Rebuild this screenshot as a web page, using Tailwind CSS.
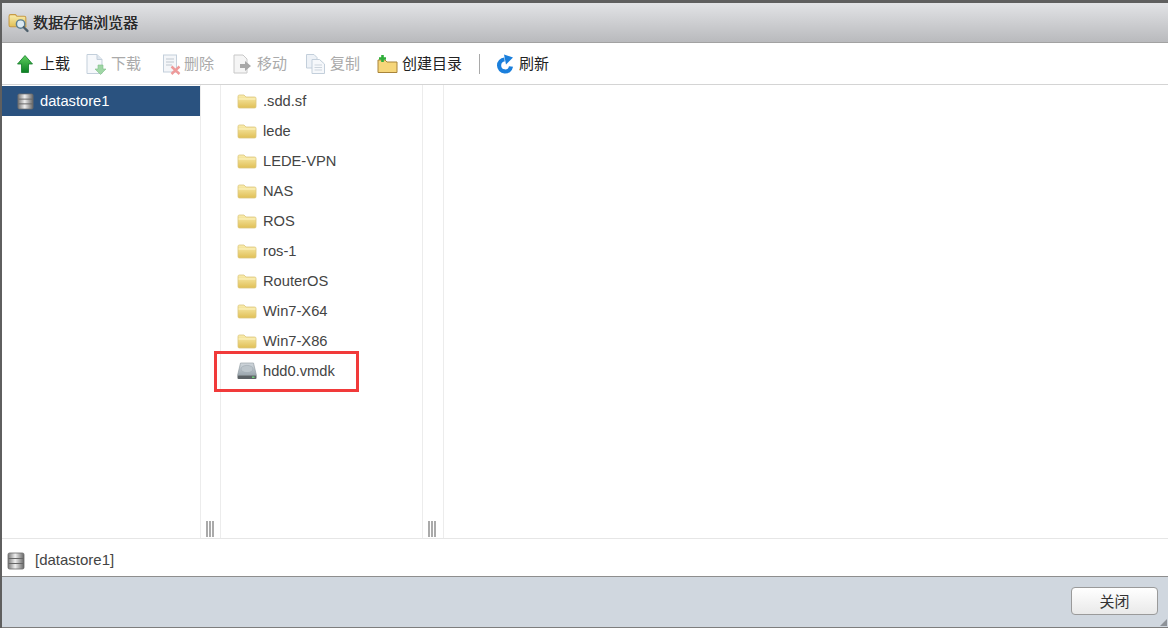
<!DOCTYPE html>
<html lang="zh">
<head>
<meta charset="utf-8">
<title>数据存储浏览器</title>
<script src="https://cdn.jsdelivr.net/npm/@tailwindcss/browser@4"></script>
</head>
<body class="m-0 w-[1168px] h-[628px] overflow-hidden bg-[#5f5f5f] font-['Liberation_Sans','Noto_Sans_CJK_SC',sans-serif] text-[14.7px] text-[#333]">
<svg width="0" height="0" class="absolute">
  <defs>
    <linearGradient id="fold" x1="0" y1="0" x2="0" y2="1"><stop offset="0" stop-color="#faeeb0"/><stop offset="1" stop-color="#e0bf55"/></linearGradient>
    <linearGradient id="disk" x1="0" y1="0" x2="1" y2="0"><stop offset="0" stop-color="#777"/><stop offset=".45" stop-color="#eee"/><stop offset="1" stop-color="#666"/></linearGradient>
    <linearGradient id="hdd" x1="0" y1="0" x2="0" y2="1"><stop offset="0" stop-color="#d2d9de"/><stop offset="1" stop-color="#9aa5ad"/></linearGradient>
    <linearGradient id="up" x1="0" y1="0" x2="0" y2="1"><stop offset="0" stop-color="#5fd05f"/><stop offset="1" stop-color="#0b7f22"/></linearGradient>
    <symbol id="folder" viewBox="0 0 20 16"><path d="M1 3.500C1 2.500 1.600 2 2.500 2H7L9 4H17.500C18.500 4 19 4.500 19 5.500V13.500C19 14.500 18.500 15 17.500 15H2.500C1.500 15 1 14.500 1 13.500Z" fill="url(#fold)" stroke="#dcc77e" stroke-width=".8"/><path d="M1.500 6H18.500" stroke="#fff6c8" stroke-width="1"/></symbol>
    <symbol id="ds" viewBox="0 0 18 18"><rect x="1" y="1" width="16" height="16" rx="1.500" fill="url(#disk)" stroke="#6b6b6b" stroke-width=".8"/><path d="M1.500 6.500H16.500M1.500 11.500H16.500" stroke="#666" stroke-width="1"/></symbol>
    <symbol id="page" viewBox="0 0 20 22"><path d="M1 1.500H11L16 6.500V20.500H1Z" fill="#f6f8fb" stroke="#c3cfdb"/><path d="M11 1.500V6.500H16" fill="#dfe6ee" stroke="#c3cfdb"/></symbol>
  </defs>
</svg>

<div class="mt-[3px] ml-[2px] h-[625px] flex flex-col bg-white rounded-tl-[3px]">
  <!-- Title bar -->
  <header class="h-[40px] shrink-0 flex items-center pl-[6px] gap-[4px] bg-gradient-to-b from-[#e2e3e6] to-[#b9babd] border-b border-[#a2a2a2]">
    <svg width="21" height="21" viewBox="0 0 20 20" class="shrink-0">
      <path d="M1 4C1 3 1.500 2.500 2.500 2.500H7L8.500 4H15.500C16.500 4 17 4.500 17 5.500V14H2.500C1.500 14 1 13.500 1 12.500Z" fill="url(#fold)" stroke="#c79a45"/>
      <circle cx="12" cy="11.500" r="4" fill="#dbeaf3" stroke="#5c7f93" stroke-width="1.400"/>
      <path d="M15 14.500L18.500 18" stroke="#4d5f6b" stroke-width="2.200" stroke-linecap="round"/>
    </svg>
    <h1 class="text-[15px] leading-none font-normal text-[#2b2b2b] [text-shadow:0.3px_0_0_#2b2b2b]">数据存储浏览器</h1>
  </header>

  <!-- Toolbar -->
  <nav class="h-[42px] shrink-0 flex items-center pl-[14px] border-b border-[#d4d4d4] text-[15px] leading-none">
    <div class="flex items-center gap-[6px] w-[70px] text-[#222]">
      <svg width="18" height="20" viewBox="0 0 17 20"><path d="M8.500 1.500L16 10H12V18.500H5V10H1Z" fill="url(#up)" stroke="#0f7a26" stroke-width=".8"/></svg>
      <span>上载</span>
    </div>
    <div class="flex items-center gap-[4px] w-[76px] text-[#aaa]">
      <svg width="21" height="22" viewBox="0 0 21 22"><use href="#page" width="20" height="22"/><path d="M12 12H17V16H20L14.500 21.500L9 16H12Z" fill="#9fd6a5" stroke="#7fbf88" stroke-width=".6"/></svg>
      <span>下载</span>
    </div>
    <div class="flex items-center gap-[3px] w-[71px] text-[#aaa]">
      <svg width="19" height="22" viewBox="0 0 19 22"><rect x="1.500" y="2" width="13" height="17" fill="#f4f6f9" stroke="#c3cfdb"/><path d="M4 6H12M4 9H12M4 12H10" stroke="#c0c8d0"/><path d="M9.500 13.500L17.500 21M17.500 13.500L9.500 21" stroke="#ee9a9a" stroke-width="2.400"/></svg>
      <span>删除</span>
    </div>
    <div class="flex items-center gap-[5px] w-[72px] text-[#aaa]">
      <svg width="19" height="22" viewBox="0 0 19 22"><path d="M1 2H10L14 6V20H1Z" fill="#f5f5f5" stroke="#c8c8c8"/><path d="M7 11H12V8L18 13L12 18V15H7Z" fill="#a8a8a8"/></svg>
      <span>移动</span>
    </div>
    <div class="flex items-center gap-[4px] w-[72px] text-[#aaa]">
      <svg width="21" height="22" viewBox="0 0 21 22"><path d="M1.500 1.500H9L12 4.500V15H1.500Z" fill="#eef2f7" stroke="#c3cfdb"/><path d="M7 6.500H14.500L19.500 11V20.500H7Z" fill="#f6f8fb" stroke="#c3cfdb"/><path d="M9.500 12H17M9.500 14.500H17M9.500 17H17" stroke="#cdd5dd"/></svg>
      <span>复制</span>
    </div>
    <div class="flex items-center gap-[4px] w-[102px] text-[#222]">
      <svg width="21" height="20" viewBox="0 0 21 20"><path d="M1 6H8L10 8H20V18.500H1Z" fill="#f6d67a" stroke="#a8843a"/><path d="M5.500 1V8M2 4.500H9" stroke="#2fae3a" stroke-width="2.600"/></svg>
      <span>创建目录</span>
    </div>
    <div class="w-px h-[20px] bg-[#a9a9a9] mr-[16px]"></div>
    <div class="flex items-center gap-[5px] text-[#222]">
      <svg width="18" height="20" viewBox="0 0 18 20"><path d="M15 12.500A6 6 0 1 1 8.500 5.500" fill="none" stroke="#1a7fdc" stroke-width="4.200"/><path d="M8 0.500L17 3.500L10 10.500Z" fill="#1a7fdc"/></svg>
      <span>刷新</span>
    </div>
  </nav>

  <!-- Browser columns -->
  <main class="relative flex-1 min-h-0 flex">
    <section class="w-[198px] shrink-0 pt-px">
      <div class="h-[30px] flex items-center pl-[15px] gap-[6px] bg-[#2a527f] text-white">
        <svg width="17" height="17"><use href="#ds" width="17" height="17"/></svg>
        <span>datastore1</span>
      </div>
    </section>
    <div class="w-[21px] shrink-0 flex items-end justify-center border-x border-[#ececec] pb-px pr-[2px]">
      <div class="flex gap-px"><i class="block w-[2px] h-[16px] bg-[#aaa]"></i><i class="block w-[2px] h-[16px] bg-[#aaa]"></i><i class="block w-[2px] h-[16px] bg-[#aaa]"></i></div>
    </div>
    <section class="w-[201px] shrink-0 pt-px pl-[16px] text-[#444]">
      <div class="h-[30px] flex items-center gap-[6px]"><svg width="20" height="16"><use href="#folder" width="20" height="16"/></svg><span>.sdd.sf</span></div>
      <div class="h-[30px] flex items-center gap-[6px]"><svg width="20" height="16"><use href="#folder" width="20" height="16"/></svg><span>lede</span></div>
      <div class="h-[30px] flex items-center gap-[6px]"><svg width="20" height="16"><use href="#folder" width="20" height="16"/></svg><span>LEDE-VPN</span></div>
      <div class="h-[30px] flex items-center gap-[6px]"><svg width="20" height="16"><use href="#folder" width="20" height="16"/></svg><span>NAS</span></div>
      <div class="h-[30px] flex items-center gap-[6px]"><svg width="20" height="16"><use href="#folder" width="20" height="16"/></svg><span>ROS</span></div>
      <div class="h-[30px] flex items-center gap-[6px]"><svg width="20" height="16"><use href="#folder" width="20" height="16"/></svg><span>ros-1</span></div>
      <div class="h-[30px] flex items-center gap-[6px]"><svg width="20" height="16"><use href="#folder" width="20" height="16"/></svg><span>RouterOS</span></div>
      <div class="h-[30px] flex items-center gap-[6px]"><svg width="20" height="16"><use href="#folder" width="20" height="16"/></svg><span>Win7-X64</span></div>
      <div class="h-[30px] flex items-center gap-[6px]"><svg width="20" height="16"><use href="#folder" width="20" height="16"/></svg><span>Win7-X86</span></div>
      <div class="h-[30px] flex items-center gap-[6px]">
        <svg width="20" height="18" viewBox="0 0 20 18"><path d="M3.500 1H16.500L19.500 13.500H0.500Z" fill="url(#hdd)" stroke="#8b959c" stroke-width=".6"/><ellipse cx="10" cy="7" rx="6" ry="3.600" fill="#bcc5cb" stroke="#a0aab1" stroke-width=".6"/><rect x="0.500" y="13.500" width="19" height="3.500" rx="1" fill="#5c6266"/><rect x="15" y="14.500" width="2.500" height="1.500" fill="#6fcf7a"/></svg>
        <span>hdd0.vmdk</span>
      </div>
    </section>
    <div class="w-[22px] shrink-0 flex items-end justify-center border-x border-[#ececec] pb-px pr-[2px]">
      <div class="flex gap-px"><i class="block w-[2px] h-[16px] bg-[#aaa]"></i><i class="block w-[2px] h-[16px] bg-[#aaa]"></i><i class="block w-[2px] h-[16px] bg-[#aaa]"></i></div>
    </div>
    <section class="flex-1"></section>
    <!-- Annotation over the list -->
    <div class="absolute left-[212px] top-[266px] w-[145px] h-[41px] border-[3px] border-[#f13a3a]"></div>
  </main>

  <!-- Status -->
  <div class="h-[39px] shrink-0 flex items-center pl-[5px] pt-[6px] gap-[10px] border-t border-t-[#e6e6e6] border-b border-b-[#8e8e8e] text-[15px] text-[#444]">
    <svg width="18" height="18"><use href="#ds" width="18" height="18"/></svg>
    <span>[datastore1]</span>
  </div>

  <!-- Footer -->
  <footer class="relative h-[51px] shrink-0 flex items-start justify-end pt-[10px] pr-[10px] bg-[#d0d7df] border-b border-[#7d7d7d]">
    <button class="w-[87px] h-[28px] rounded-[4px] border border-[#9a9a9a] bg-gradient-to-b from-white to-[#e9e9e9] text-[15px] leading-none text-[#333]">关闭</button>
    <svg width="9" height="9" viewBox="0 0 9 9" class="absolute right-0 bottom-0"><path d="M8 1V8H1Z" fill="#8d9298"/></svg>
  </footer>
</div>
</body>
</html>
